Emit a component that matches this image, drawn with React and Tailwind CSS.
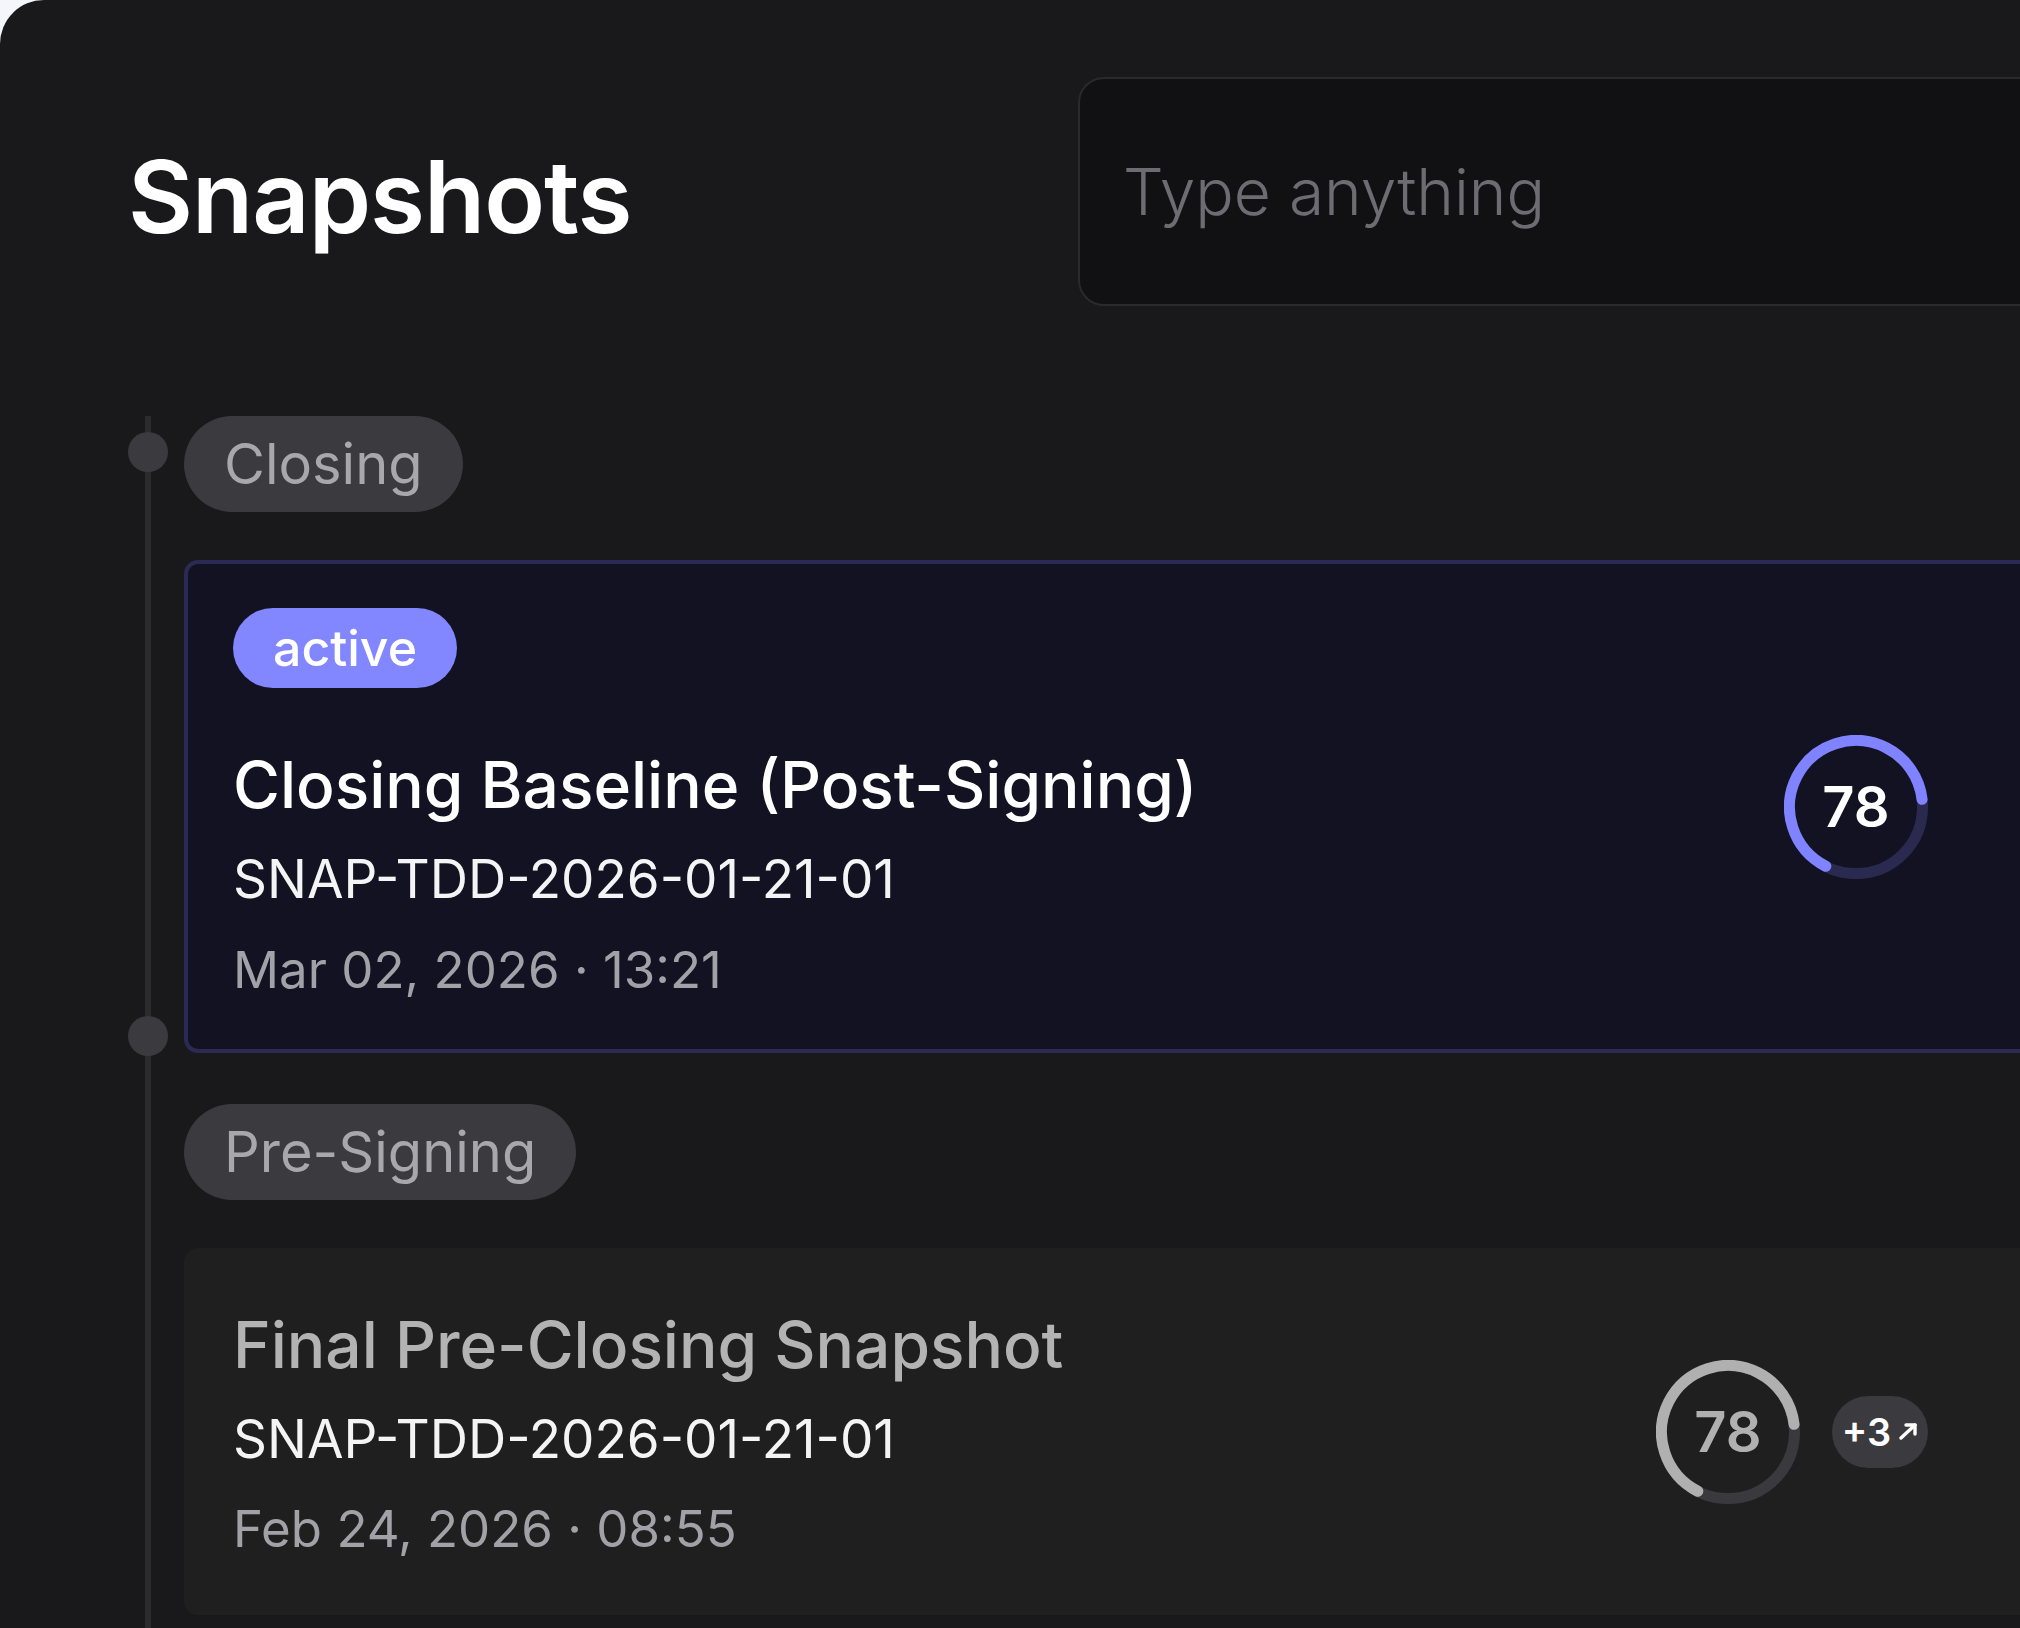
import React from "react";

function Ring({ value, color, track, textColor }) {
  const r = 66.5;
  const c = 2 * Math.PI * r;
  const len = (c * 236) / 360;
  return (
    <div className="relative w-[144px] h-[144px] shrink-0 flex items-center justify-center">
      <svg className="absolute inset-0" width="144" height="144" viewBox="0 0 144 144">
        <circle cx="72" cy="72" r={r} fill="none" stroke={track} strokeWidth="11" />
        <circle
          cx="72"
          cy="72"
          r={r}
          fill="none"
          stroke={color}
          strokeWidth="11"
          strokeLinecap="round"
          strokeDasharray={`${len} ${c}`}
          transform="rotate(117 72 72)"
        />
      </svg>
      <span className={`relative text-[56px] leading-none font-semibold ${textColor}`}>{value}</span>
    </div>
  );
}

function StagePill({ label }) {
  return (
    <div className="self-start h-[96px] px-[40px] flex items-center rounded-full bg-[#3a3a3f] text-[56px] leading-none text-[#a7a7ac]">
      {label}
    </div>
  );
}

export default function App() {
  return (
    <div className="w-[2020px] h-[1628px] overflow-hidden bg-[#f4f6fb] font-['Inter','Noto_Sans',sans-serif]">
      <div className="w-[2300px] h-[1700px] rounded-tl-[44px] bg-[#19191c]">
        {/* Header */}
        <div className="flex items-start pt-[77px] pl-[128px]">
          <h1 className="w-[950px] shrink-0 pt-[70px] text-[100px] leading-none font-semibold text-white tracking-[-0.01em]">
            Snapshots
          </h1>
          <div className="w-[1300px] h-[229px] shrink-0 rounded-[26px] border-2 border-[#2a2a2e] bg-[#111113] flex items-center pl-[43px]">
            <input
              className="w-full bg-transparent outline-none text-[64px] font-light text-white placeholder:text-[#6c6c72]"
              placeholder="Type anything"
            />
          </div>
        </div>

        {/* Timeline */}
        <div className="relative mt-[110px] pl-[184px] h-[1300px]">
          <div className="absolute left-[145px] top-0 bottom-0 w-[6px] bg-[#2b2b2f]" />

          <div className="flex flex-col gap-[51px]">
            <section className="relative flex flex-col gap-[48px]">
              <div className="absolute left-[-56px] top-[16px] w-[40px] h-[40px] rounded-full bg-[#3a3a3f]" />
              <StagePill label="Closing" />
              <div className="w-[1900px] rounded-[14px] border-4 border-[#2a2a54] bg-[#121222] flex items-center justify-between pl-[45px] pr-[152px]">
                <div className="flex flex-col pt-[44px] pb-[54px]">
                  <span className="self-start h-[80px] px-[40px] flex items-center rounded-full bg-[#8286ff] text-[50px] leading-none font-medium text-white">
                    active
                  </span>
                  <div className="mt-[65px] text-[64px] leading-none font-medium text-white">
                    Closing Baseline (Post-Signing)
                  </div>
                  <div className="mt-[36px] text-[53px] leading-none text-[#f4f4f5]">SNAP-TDD-2026-01-21-01</div>
                  <div className="mt-[38px] text-[51px] leading-none text-[#a1a1a7]">Mar 02, 2026 · 13:21</div>
                </div>
                <Ring value="78" color="#8083ff" track="#2a2a50" textColor="text-white" />
              </div>
            </section>

            <section className="relative flex flex-col gap-[48px]">
              <div className="absolute left-[-56px] top-[-88px] w-[40px] h-[40px] rounded-full bg-[#3a3a3f]" />
              <StagePill label="Pre-Signing" />
              <div className="w-[1900px] rounded-[14px] border-4 border-transparent bg-[#1f1f1f] flex items-center justify-between pl-[45px] pr-[152px]">
                <div className="flex flex-col pt-[61px] pb-[57px]">
                  <div className="text-[64px] leading-none font-medium text-[#b3b3b3]">Final Pre-Closing Snapshot</div>
                  <div className="mt-[36px] text-[53px] leading-none text-[#f4f4f5]">SNAP-TDD-2026-01-21-01</div>
                  <div className="mt-[37px] text-[51px] leading-none text-[#a1a1a7]">Feb 24, 2026 · 08:55</div>
                </div>
                <div className="flex items-center gap-[32px]">
                  <Ring value="78" color="#b0b0b0" track="#3a3a3e" textColor="text-[#b0b0b0]" />
                  <div className="w-[96px] h-[72px] rounded-full bg-[#3a3a3f] flex items-center justify-center gap-[8px]">
                    <span className="text-[38px] leading-none font-semibold text-white">+3</span>
                    <svg width="19" height="17" viewBox="0 0 19 17" fill="none" stroke="white" strokeWidth="3.4" strokeLinecap="round" strokeLinejoin="round">
                      <path d="M2 15 L16 2" />
                      <path d="M7 2 H16 V11" />
                    </svg>
                  </div>
                </div>
              </div>
            </section>
          </div>
        </div>
      </div>
    </div>
  );
}
